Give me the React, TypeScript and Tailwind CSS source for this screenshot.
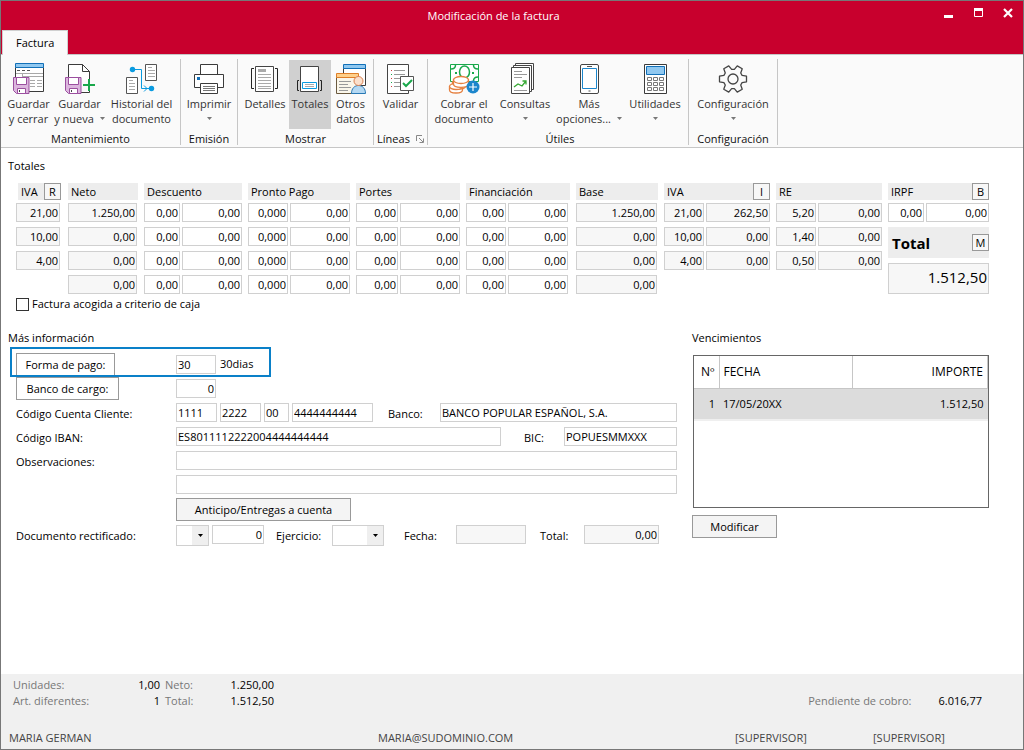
import type { ReactNode } from 'react';

/* ---------- Icons ---------- */

function Icon({ children }: { children: ReactNode }) {
  return (
    <svg width="32" height="32" viewBox="0 0 32 32" fill="none" aria-hidden="true" className="shrink-0">
      {children}
    </svg>
  );
}

function Floppy() {
  return (
    <g stroke="#9b4f9f">
      <path d="M.5 15.5h15.500v16H3.500l-3-3z" fill="#dcb6de" />
      <path d="M3.500 15.500h10v7h-10z" fill="#fff" />
      <path d="M4.500 26.500h8v5h-8z" fill="#fff" />
      <path d="M6.500 28v2" stroke="#444" />
    </g>
  );
}

function SaveCloseIcon() {
  return (
    <Icon>
      <path d="M2.500 5.500h28v24h-28z" fill="#fff" stroke="#3b3b3b" />
      <path d="M2.500 1.500h28v4h-28z" fill="#90c8f0" stroke="#1270b8" />
      <path d="M4 8.500h3m2 0h3m2 0h3" stroke="#555" />
      <path d="M3 11.500h27M9.500 11v4M9.500 14.500H30M17 18.500h5m2 0h5M17 21.500h5m2 0h5M17 24.500h5m2 0h5" stroke="#a9a9a9" />
      <Floppy />
    </Icon>
  );
}

function SaveNewIcon() {
  return (
    <Icon>
      <path d="M4.500 15V2.500h14l7 7V19M25.500 28v2.500H16" fill="#fff" stroke="#3b3b3b" />
      <path d="M18.500 2.500v7h7" stroke="#3b3b3b" />
      <g transform="translate(1 0)"><Floppy /></g>
      <path d="M25 17v12M19 23h12" stroke="#19a84b" strokeWidth="2" />
    </Icon>
  );
}

function HistoryIcon() {
  return (
    <Icon>
      <path d="M19.500 2.500h11v16h-11zM.5 15.500h11v16H.5z" fill="#fff" stroke="#555" />
      <path d="M22 5.500h4m-4 3h7m-7 3h7m-7 3h7M3 18.500h4m-4 3h6m-6 3h6m-6 3h6" stroke="#aaa" />
      <path d="M7 7.500h8.500v19H25M18 23.500l3 3-3 3" stroke="#0a9be0" />
      <circle cx="6.500" cy="7.500" r="2.700" fill="#0a9be0" />
      <circle cx="25.500" cy="26.500" r="2.700" fill="#0a9be0" />
    </Icon>
  );
}

function PrinterIcon() {
  return (
    <Icon>
      <path d="M7.500 2.500h17v10h-17zM1.500 12.500h29v13h-29z" fill="#fff" stroke="#3b3b3b" />
      <path d="M7.500 21.500h17v10h-17z" fill="#fff" stroke="#3b3b3b" />
      <path d="M10 24.500h12m-12 2h12m-12 2h12" stroke="#777" />
      <path d="M4 15h3v3H4z" fill="#1270b8" />
    </Icon>
  );
}

function DetailsIcon() {
  return (
    <Icon>
      <path d="M6.500 4.500h18v25h-18z" fill="#fff" stroke="#444" />
      <path d="M9 7h8v3H9z" fill="#aaa" />
      <path d="M9 12.500h13m-13 3h13m-13 3h13m-13 3h13m-13 3h13m-13 2h13" stroke="#aaa" />
      <path d="M5 6.500H2.500v20H5M26 6.500h2.500v20H26" stroke="#222" />
    </Icon>
  );
}

function TotalsIcon() {
  return (
    <Icon>
      <path d="M6.500 4.500h18v25h-18z" fill="#fff" stroke="#444" />
      <path d="M8.500 20.500h14v6h-14z" fill="#fff" stroke="#0a9be0" />
      <path d="M11 22.500h9m-9 2h9" stroke="#aaa" />
      <path d="M5 18.500H3.500v10H5M26 18.500h1.500v10H26" stroke="#222" />
    </Icon>
  );
}

function OtherDataIcon() {
  return (
    <Icon>
      <path d="M8.500 6.500h22v17h-22z" fill="#fff" stroke="#3b3b3b" />
      <path d="M8.500 2.500h22v4h-22z" fill="#90c8f0" stroke="#1270b8" />
      <path d="M1.500 15.500h22v16h-22z" fill="#faf6ea" stroke="#6a5a40" />
      <path d="M1.500 11.500h22v4h-22z" fill="#ffd08a" stroke="#de7f28" />
      <path d="M4 19.500h12m-12 3h9m-9 3h12m-12 3h9" stroke="#999" />
      <path d="M16.500 31.500c0-5 3-8 7-8s7 3 7 8z" fill="#b4d8f2" stroke="#2878b4" />
      <circle cx="23.500" cy="19" r="4.500" fill="#fbe0cc" stroke="#d98050" />
    </Icon>
  );
}

function ValidateIcon() {
  return (
    <Icon>
      <path d="M2.500 2.500h21v29h-21z" fill="#fff" stroke="#444" />
      <path d="M9 8.500h11m-11 4h11m-11 4h7m-7 4h6m-6 4h6" stroke="#999" />
      <path d="M6 8.500h1m-1 8h1m-1 8h1" stroke="#d04040" />
      <path d="M6 12.500h1m-1 8h1" stroke="#19a84b" />
      <path d="M15.500 14.500h13v14h-13z" fill="#fff" stroke="#555" />
      <path d="M18 21l3 3 6-6" stroke="#19a84b" strokeWidth="2" />
    </Icon>
  );
}

function CashIcon() {
  return (
    <Icon>
      <path d="M2.500 2.500h28v17h-28z" fill="#fff" stroke="#19a84b" />
      <path d="M3 7c3 0 4.500-2 4.500-4M30 7c-3 0-4.500-2-4.500-4M30 15c-3 0-4.500 2-4.500 4" stroke="#19a84b" strokeWidth="1.500" />
      <ellipse cx="16.500" cy="10" rx="5" ry="6" stroke="#19a84b" strokeWidth="1.500" />
      <path d="M7 10h2v2H7zM24 10h2v2h-2z" fill="#19a84b" />
      <g fill="#fff" stroke="#e58040" strokeWidth="1.300">
        <path d="M1.500 25v3c0 4 13 4 13 0v-3z" />
        <path d="M4.500 20v4c0 4 13 4 13 0v-4z" />
        <ellipse cx="8" cy="24.500" rx="6.500" ry="3" />
        <path d="M5.500 18v4c0 4.500 15 4.500 15 0v-4z" />
        <ellipse cx="13" cy="18" rx="7.500" ry="3.500" />
      </g>
      <circle cx="25" cy="25" r="6.500" fill="#1c86cc" />
      <path d="M25 21v8m-4-4h8" stroke="#fff" strokeWidth="1.200" />
    </Icon>
  );
}

function ReportsIcon() {
  return (
    <Icon>
      <path d="M6.500 1.500h18v26h-18z" fill="#fff" stroke="#444" />
      <path d="M4.500 3.500h18v26h-18z" fill="#fff" stroke="#444" />
      <path d="M2.500 5.500h18v26h-18z" fill="#fff" stroke="#444" />
      <path d="M5 9.500h8m-8 3h13m-13 3h8m-8 13h13" stroke="#999" />
      <path d="M5 25l4-3 4 2 4-5M13.500 19H17v3.500" stroke="#35a832" strokeWidth="1.300" />
    </Icon>
  );
}

function PhoneIcon() {
  return (
    <Icon>
      <rect x="7.500" y="2.500" width="18" height="29" rx="1.500" fill="#fff" stroke="#444" />
      <path d="M9.500 6.500h14v20h-14z" stroke="#1c86cc" />
      <path d="M14 4.500h5M15.500 29h2" stroke="#555" />
    </Icon>
  );
}

function CalculatorIcon() {
  return (
    <Icon>
      <path d="M5.500 2.500h22v29h-22z" fill="#fff" stroke="#3b3b3b" />
      <path d="M7.500 4.500h18v8h-18z" fill="#90c8f0" stroke="#1270b8" />
      <g stroke="#777">
        <path d="M8.500 15.500h4v3h-4zM14.500 15.500h4v3h-4zM20.500 15.500h4v3h-4z" />
        <path d="M8.500 20.500h4v3h-4zM14.500 20.500h4v3h-4zM20.500 20.500h4v3h-4z" />
        <path d="M8.500 25.500h4v3h-4zM14.500 25.500h4v3h-4zM20.500 25.500h4v3h-4z" />
      </g>
    </Icon>
  );
}

const gearPoints = [0, 60, 120, 180, 240, 300]
  .flatMap((a) => [[a - 22, 9.8], [a - 12, 13.8], [a + 12, 13.8], [a + 22, 9.8]])
  .map(([deg, r]) => {
    const t = (deg * Math.PI) / 180;
    return `${(16 + r * Math.cos(t)).toFixed(2)},${(17 + r * Math.sin(t)).toFixed(2)}`;
  })
  .join(' ');

function GearIcon() {
  return (
    <Icon>
      <polygon points={gearPoints} stroke="#444" strokeWidth="1.300" strokeLinejoin="round" />
      <circle cx="16" cy="17" r="5" stroke="#444" strokeWidth="1.300" />
    </Icon>
  );
}

function Caret({ className = '' }: { className?: string }) {
  return (
    <svg width="5" height="3" viewBox="0 0 5 3" aria-hidden="true" className={className}>
      <path d="M0 0h5L2.500 3z" fill="currentColor" />
    </svg>
  );
}

/* ---------- Ribbon ---------- */

function Tool({ icon, line1, line2, caret, width, active }: {
  icon: ReactNode; line1: string; line2?: string; caret?: boolean; width: string; active?: boolean;
}) {
  return (
    <button
      type="button"
      className={`flex h-[69px] flex-col items-center whitespace-nowrap pt-0.5 leading-[15px] text-[#333] ${width} ${active ? 'bg-[#d0d0d0]' : ''}`}
    >
      {icon}
      <span className="pt-0.5">{line1}</span>
      <span className="flex h-[15px] items-center justify-center gap-1.5">
        {line2}
        {caret && <Caret className="text-[#777]" />}
      </span>
    </button>
  );
}

function Group({ title, width, children, launcher }: {
  title: string; width: string; children: ReactNode; launcher?: boolean;
}) {
  return (
    <section aria-label={title} className={`flex shrink-0 flex-col border-r border-[#c6c6c6] ${width}`}>
      <div className="flex justify-center pt-px">{children}</div>
      <div className="flex items-center justify-center gap-1.5 pt-1 leading-3 text-[#111]">
        {title}
        {launcher && (
          <svg width="8" height="8" viewBox="0 0 8 8" fill="none" stroke="#888" aria-hidden="true">
            <path d="M.5 6V.5H6M3 3l4 4M7.500 3.500v4h-4" />
          </svg>
        )}
      </div>
    </section>
  );
}

/* ---------- Form pieces ---------- */

function Field({ label, value = '', className = '', right, readOnly }: {
  label: string; value?: string; className?: string; right?: boolean; readOnly?: boolean;
}) {
  return (
    <input
      aria-label={label}
      defaultValue={value}
      readOnly={readOnly}
      className={`h-[19px] min-w-0 rounded-none border border-[#d0d0d0] px-px pb-px leading-4 outline-none ${right ? 'text-right' : ''} ${readOnly ? 'bg-[#f7f7f7]' : 'bg-white'} ${className}`}
    />
  );
}

function KeyButton({ children }: { children: string }) {
  return (
    <button type="button" className="h-[17px] w-[17px] shrink-0 border border-[#999] bg-[#f7f7f7] leading-[14px]">
      {children}
    </button>
  );
}

type Column = {
  title: string;
  button?: string;
  readOnly?: boolean;
  first?: string;
  head?: string;
  pad?: string;
  rows: string[][];
};

const zero = '0,00';

const columns: Column[] = [
  { title: 'IVA', button: 'R', readOnly: true, head: 'ml-0.5 mr-px', pad: 'pr-0.5', rows: [['21,00'], ['10,00'], ['4,00']] },
  { title: 'Neto', readOnly: true, pad: 'pr-px', rows: [['1.250,00'], [zero], [zero], [zero]] },
  { title: 'Descuento', first: 'w-9', rows: [[zero, zero], [zero, zero], [zero, zero], [zero, zero]] },
  { title: 'Pronto Pago', first: 'w-10', rows: [['0,000', zero], ['0,000', zero], ['0,000', zero], ['0,000', zero]] },
  { title: 'Portes', first: 'w-[42px]', rows: [[zero, zero], [zero, zero], [zero, zero], [zero, zero]] },
  { title: 'Financiación', first: 'w-10', pad: 'pr-0.5', rows: [[zero, zero], [zero, zero], [zero, zero], [zero, zero]] },
  { title: 'Base', readOnly: true, pad: 'pr-px', rows: [['1.250,00'], [zero], [zero], [zero]] },
  { title: 'IVA', button: 'I', readOnly: true, first: 'w-10', rows: [['21,00', '262,50'], ['10,00', zero], ['4,00', zero]] },
  { title: 'RE', readOnly: true, first: 'w-10', rows: [['5,20', zero], ['1,40', zero], ['0,50', zero]] },
  { title: 'IRPF', button: 'B', first: 'w-9', rows: [[zero, zero]] },
];

function TotalsColumn({ column, children }: { column: Column; children?: ReactNode }) {
  return (
    <div className="flex min-w-0 flex-col">
      <div className={`mb-[3px] flex h-[17px] items-center justify-between bg-[#ededed] pl-[3px] ${column.head ?? ''}`}>
        {column.title}
        {column.button && <KeyButton>{column.button}</KeyButton>}
      </div>
      <div className={`flex flex-col gap-[5px] ${column.pad ?? ''}`}>
        {column.rows.map((row, r) => (
          <div key={r} className="flex gap-0.5">
            {row.map((value, i) => (
              <Field
                key={i}
                right
                readOnly={column.readOnly}
                label={`${column.title} ${r + 1}.${i + 1}`}
                value={value}
                className={i === 0 && row.length > 1 ? `shrink-0 ${column.first}` : 'flex-1'}
              />
            ))}
          </div>
        ))}
      </div>
      {children}
    </div>
  );
}

function Drop({ label, width }: { label: string; width: string }) {
  return (
    <div className={`relative flex h-[21px] border border-[#d0d0d0] ${width}`}>
      <select aria-label={label} className="w-full appearance-none bg-white outline-none">
        <option></option>
      </select>
      <span className="pointer-events-none absolute inset-y-0 right-0 flex w-4 items-center justify-center bg-[#efefef]">
        <Caret className="text-black" />
      </span>
    </div>
  );
}

function Row({ label, children }: { label?: ReactNode; children: ReactNode }) {
  return (
    <div className="flex h-6 items-start">
      <div className="w-40 shrink-0">{label}</div>
      {children}
    </div>
  );
}

const labelClass = 'block whitespace-nowrap pt-[3px] leading-4';

export default function App() {
  return (
    <div className="flex min-h-screen flex-col border border-[#777] bg-white font-['Open_Sans','Noto_Sans',sans-serif] text-[11px] leading-4 text-black">
      <header className="bg-[#c8002d]">
        <div className="flex h-[29px] items-center text-white">
          <h1 className="flex-1 pl-[42px] text-center">Modificación de la factura</h1>
          <div className="flex items-center gap-5 pr-2.5 pb-1.5">
            <button type="button" aria-label="Minimizar">
              <svg width="10" height="10" viewBox="0 0 10 10"><path d="M0 7h9v3H0z" fill="#fff" /></svg>
            </button>
            <button type="button" aria-label="Maximizar">
              <svg width="9" height="9" viewBox="0 0 9 9" fill="none" stroke="#fff"><path d="M.5.5h8v8h-8z" /><path d="M0 1.500h9" strokeWidth="3" /></svg>
            </button>
            <button type="button" aria-label="Cerrar">
              <svg width="10" height="10" viewBox="0 0 10 10" stroke="#fff" strokeWidth="2.200"><path d="M1 1l8 8M9 1L1 9" /></svg>
            </button>
          </div>
        </div>
        <div className="flex border-b border-[#c6c6c6] pl-px">
          <button type="button" className="-mb-px h-[25px] border border-b-0 border-[#d0d0d0] bg-[#fafafa] px-[13px]">
            Factura
          </button>
        </div>
      </header>

      <nav aria-label="Factura" className="flex border-b border-[#c6c6c6] bg-[#fafafa] pt-1 pb-0.5">
        <Group title="Mantenimiento" width="w-[180px]">
          <Tool icon={<SaveCloseIcon />} line1="Guardar" line2="y cerrar" width="w-[52px]" />
          <Tool icon={<SaveNewIcon />} line1="Guardar" line2="y nueva" caret width="w-[50px]" />
          <Tool icon={<HistoryIcon />} line1="Historial del" line2="documento" width="w-[74px]" />
        </Group>
        <Group title="Emisión" width="w-[57px]">
          <Tool icon={<PrinterIcon />} line1="Imprimir" caret width="w-[54px]" />
        </Group>
        <Group title="Mostrar" width="w-[136px]">
          <Tool icon={<DetailsIcon />} line1="Detalles" width="w-12" />
          <Tool icon={<TotalsIcon />} line1="Totales" width="w-[42px]" active />
          <Tool icon={<OtherDataIcon />} line1="Otros" line2="datos" width="w-[39px]" />
        </Group>
        <Group title="Líneas" width="w-[54px]" launcher>
          <Tool icon={<ValidateIcon />} line1="Validar" width="w-[50px]" />
        </Group>
        <Group title="Útiles" width="w-[261px] pl-1">
          <Tool icon={<CashIcon />} line1="Cobrar el" line2="documento" width="w-[62px]" />
          <Tool icon={<ReportsIcon />} line1="Consultas" caret width="w-[60px]" />
          <Tool icon={<PhoneIcon />} line1="Más" line2="opciones..." caret width="w-[68px]" />
          <Tool icon={<CalculatorIcon />} line1="Utilidades" caret width="w-16" />
        </Group>
        <Group title="Configuración" width="w-[89px]">
          <Tool icon={<GearIcon />} line1="Configuración" caret width="w-[86px]" />
        </Group>
      </nav>

      <main className="flex-1 pr-[34px] pl-[15px]">
        <h2 className="-ml-2 pt-2.5 pb-[9px]">Totales</h2>
        <div className="grid grid-cols-[46fr_70fr_98fr_102fr_104fr_104fr_82fr_106fr_106fr_101fr] gap-1.5">
          {columns.map((column, i) => (
            <TotalsColumn key={i} column={column}>
              {column.title === 'IRPF' && (
                <>
                  <div className="mt-[5px] flex h-[31px] items-center justify-between bg-[#ededed] pl-1 text-[15px] font-bold">
                    Total
                    <span className="flex text-[11px] font-normal"><KeyButton>M</KeyButton></span>
                  </div>
                  <input
                    aria-label="Total"
                    readOnly
                    defaultValue="1.512,50"
                    className="mt-[5px] h-[31px] w-full min-w-0 border border-[#d0d0d0] bg-[#f7f7f7] px-px pb-1 text-right text-[15px] outline-none"
                  />
                </>
              )}
            </TotalsColumn>
          ))}
        </div>
        <label className="mt-0.5 flex h-4 items-center gap-[3px]">
          <input type="checkbox" className="h-[13px] w-[13px] appearance-none border border-[#333] bg-white checked:bg-[#333]" />
          Factura acogida a criterio de caja
        </label>

        <div className="mt-[18px] flex gap-[15px]">
          <section className="min-w-0 flex-1">
            <h2 className="-ml-2 h-[23px]">Más información</h2>
            <div className="relative">
              <span aria-hidden="true" className="pointer-events-none absolute -top-1.5 -left-1.5 z-10 h-[30px] w-[261px] border-2 border-[#0a80c8]" />
              <Row label={<button type="button" className="h-[23px] w-[99px] border border-[#999]">Forma de pago:</button>}>
                <div className="flex pt-0.5">
                  <Field label="Forma de pago" value="30" className="w-10" />
                  <span className="pt-px pl-1">30dias</span>
                </div>
              </Row>
            </div>
            <Row label={<button type="button" className="h-[23px] w-[103px] border border-[#999]">Banco de cargo:</button>}>
              <div className="flex pt-0.5"><Field label="Banco de cargo" value="0" right className="w-10" /></div>
            </Row>
            <div className="pt-0.5">
              <Row label={<span className={labelClass}>Código Cuenta Cliente:</span>}>
                <Field label="Entidad" value="1111" className="mr-[3px] w-[41px]" />
                <Field label="Oficina" value="2222" className="mr-[3px] w-[41px]" />
                <Field label="Dígito de control" value="00" className="mr-[3px] w-[25px]" />
                <Field label="Número de cuenta" value="4444444444" className="w-[81px]" />
                <label htmlFor="bank" className={`w-[67px] pl-[15px] ${labelClass}`}>Banco:</label>
                <input id="bank" defaultValue="BANCO POPULAR ESPAÑOL, S.A." className="h-[19px] min-w-0 flex-1 border border-[#d0d0d0] px-px pb-px leading-4 outline-none" />
              </Row>
              <Row label={<span className={labelClass}>Código IBAN:</span>}>
                <Field label="Código IBAN" value="ES8011112222004444444444" className="flex-1" />
                <label htmlFor="bic" className={`w-[63px] pl-[23px] ${labelClass}`}>BIC:</label>
                <input id="bic" defaultValue="POPUESMMXXX" className="h-[19px] w-[113px] border border-[#d0d0d0] px-px pb-px leading-4 outline-none" />
              </Row>
              <Row label={<span className={labelClass}>Observaciones:</span>}>
                <Field label="Observaciones" className="flex-1" />
              </Row>
              <Row>
                <Field label="Observaciones, línea 2" className="flex-1" />
              </Row>
            </div>
            <div className="-mt-px pb-1 pl-40">
              <button type="button" className="block h-[23px] w-[175px] border border-[#999] bg-[#f4f4f4]">Anticipo/Entregas a cuenta</button>
            </div>
            <Row label={<span className={labelClass}>Documento rectificado:</span>}>
              <Drop label="Serie del documento rectificado" width="w-[33px]" />
              <Field label="Documento rectificado" value="0" right className="ml-[3px] w-[52px]" />
              <span className={`w-[68px] pl-3 ${labelClass}`}>Ejercicio:</span>
              <Drop label="Ejercicio" width="w-[52px]" />
              <span className={`w-[72px] pl-5 ${labelClass}`}>Fecha:</span>
              <Field label="Fecha" readOnly className="w-[70px]" />
              <span className={`w-[58px] pl-3.5 ${labelClass}`}>Total:</span>
              <Field label="Total rectificado" value="0,00" right readOnly className="w-[75px]" />
            </Row>
          </section>

          <section className="w-[297px] shrink-0">
            <h2 className="h-[25px]">Vencimientos</h2>
            <div className="ml-px min-h-[153px] border border-[#666]">
              <table className="w-full table-fixed border-collapse text-[12px]">
                <thead>
                  <tr className="h-8 border-b border-[#c6c6c6]">
                    <th className="w-[25px] border-r border-[#c6c6c6] pr-1 text-right font-normal">Nº</th>
                    <th className="w-[133px] border-r border-[#c6c6c6] pl-1 text-left font-normal">FECHA</th>
                    <th className="border-r border-[#c6c6c6] pr-1 text-right font-normal">IMPORTE</th>
                  </tr>
                </thead>
                <tbody>
                  <tr className="h-8 border-b-2 border-[#efefef] bg-[#dcdcdc] text-[11px]">
                    <td className="pr-1 text-right">1</td>
                    <td className="pl-1">17/05/20XX</td>
                    <td className="pr-1 text-right">1.512,50</td>
                  </tr>
                </tbody>
              </table>
            </div>
            <button type="button" className="mt-[7px] block h-[23px] w-[85px] border border-[#999] bg-[#f4f4f4]">Modificar</button>
          </section>
        </div>
      </main>

      <footer className="bg-[#f0f0f0]">
        <div className="flex items-start justify-between pt-[3px] pr-[41px] pl-3 text-[#777]">
          <dl className="grid grid-cols-[88px_59px_68px_46px] [&>dd]:text-right [&>dd]:text-black">
            <dt>Unidades:</dt><dd>1,00</dd>
            <dt className="pl-[5px]">Neto:</dt><dd>1.250,00</dd>
            <dt>Art. diferentes:</dt><dd>1</dd>
            <dt className="pl-[5px]">Total:</dt><dd>1.512,50</dd>
          </dl>
          <dl className="flex gap-[27px] pt-4">
            <dt>Pendiente de cobro:</dt>
            <dd className="text-black">6.016,77</dd>
          </dl>
        </div>
        <div className="grid grid-cols-[369fr_357fr_138fr_150fr] pt-[21px] pb-[3px] pl-2 text-[#444]">
          <span>MARIA GERMAN</span>
          <span>MARIA@SUDOMINIO.COM</span>
          <span>[SUPERVISOR]</span>
          <span>[SUPERVISOR]</span>
        </div>
      </footer>
    </div>
  );
}
